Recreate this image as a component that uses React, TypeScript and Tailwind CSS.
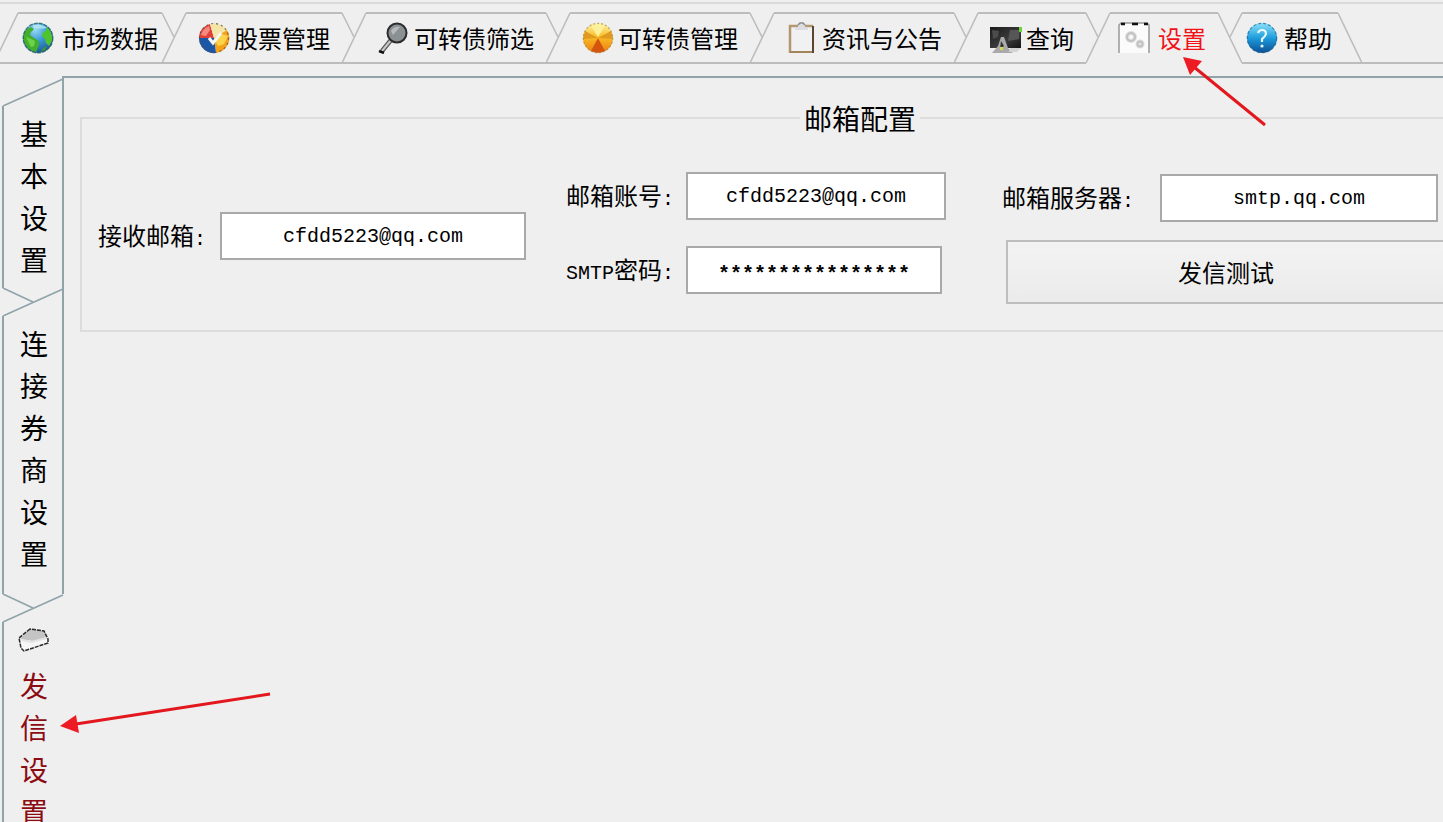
import type { ReactNode } from 'react';

const LINE = '#bcbcbc';
const SIDE = '#8fa3a9';

function GlobeIcon() {
  return (
    <svg className="h-8 w-8 shrink-0" viewBox="0 0 32 32" aria-hidden="true">
      <defs>
        <radialGradient id="sea" cx="0.4" cy="0.2" r="0.8">
          <stop offset="0" stopColor="#9fdcf5" />
          <stop offset="0.5" stopColor="#3d9bd6" />
          <stop offset="1" stopColor="#1c5b9c" />
        </radialGradient>
      </defs>
      <circle cx="16" cy="16" r="15" fill="url(#sea)" />
      <path d="M2 11 L5 7 L9 5 L12 7 L9 10 L8 13 L12 16 L17 19 L17 23 L14 30 L10 29 L6 26 L3 22 L1 17 Z" fill="#43b02c" />
      <path d="M4 15 L9 17 L13 19 L12 24 L9 25 L7 21 Z" fill="#6fd04a" />
      <path d="M24 5 L28 8 L30 14 L30 19 L27 24 L24 21 L23 17 L20 14 L21 10 L24 9 Z" fill="#4fc42f" />
      <path d="M21 26 L25 24 L23 28 L19 30 Z" fill="#389a32" />
      <path d="M11 3 Q19 1 25 6 Q18 7 12 6 Z" fill="#b9e8f2" opacity="0.8" />
      <circle cx="16" cy="16" r="14.8" fill="none" stroke="#245f5b" strokeWidth="1.4" strokeDasharray="4 1" opacity="0.75" />
    </svg>
  );
}

function PieIcon() {
  return (
    <svg className="h-8 w-8 shrink-0" viewBox="0 0 32 32" aria-hidden="true">
      <path d="M16 16 L1 16 A15 14 0 0 1 12 2 Z" fill="#e0403a" />
      <path d="M16 16 L12 2 A15 15 0 0 1 29 8 Z" fill="#f3e6a6" />
      <path d="M16 16 L29 8 A15 15 0 0 1 18 31 Z" fill="#f5a21b" />
      <path d="M16 16 L24 12 L30 14 L26 22 L20 24 Z" fill="#fcd34b" />
      <path d="M16 16 L18 31 A15 15 0 0 1 1 16 Z" fill="#1c57a6" />
      <path d="M3 13 A14 14 0 0 1 11 4 L12 8 L8 14 Z" fill="#f48b80" />
      <path d="M11 16 L15 21 L23 11" fill="none" stroke="#f4f6f8" strokeWidth="3" />
      <circle cx="16" cy="16" r="14.5" fill="none" stroke="#5c4a52" strokeWidth="1.2" strokeDasharray="2 3" opacity="0.8" />
    </svg>
  );
}

function MagnifierIcon() {
  return (
    <svg className="h-8 w-8 shrink-0" viewBox="0 0 32 32" aria-hidden="true">
      <path d="M13 18 L4 29" stroke="#555" strokeWidth="4.5" />
      <path d="M13 18 L4 29" stroke="#c9c9c9" strokeWidth="2" />
      <path d="M1 29 L6 31" stroke="#111" strokeWidth="2.5" />
      <circle cx="19" cy="11" r="9.5" fill="#8b9093" stroke="#2b2b2b" strokeWidth="2" />
      <path d="M13 9 Q16 4 22 5 L15 13 Z" fill="#b6babc" />
    </svg>
  );
}

function OrangeIcon() {
  return (
    <svg className="h-8 w-8 shrink-0" viewBox="0 0 32 32" aria-hidden="true">
      <defs>
        <linearGradient id="amber" x1="0" y1="0" x2="0" y2="1">
          <stop offset="0" stopColor="#fff3b0" />
          <stop offset="0.45" stopColor="#f9bf25" />
          <stop offset="1" stopColor="#ef7c10" />
        </linearGradient>
      </defs>
      <circle cx="16" cy="16" r="15" fill="url(#amber)" />
      <path d="M16 16 L1 17 L3 9 Z" fill="#e09a22" />
      <path d="M16 16 L31 17 L29 9 Z" fill="#e09a22" />
      <path d="M16 16 L9 29 Q16 32 23 29 Z" fill="#d4560e" />
      <path d="M16 15 L9 4 Q16 0 23 4 Z" fill="#fdf09a" />
      <circle cx="16" cy="16" r="14.7" fill="none" stroke="#9b8a59" strokeWidth="1.2" strokeDasharray="2 2" opacity="0.7" />
    </svg>
  );
}

function ClipboardIcon() {
  return (
    <svg className="h-8 w-8 shrink-0" viewBox="0 0 32 32" aria-hidden="true">
      <rect x="4" y="4" width="23" height="27" fill="#f1f1f3" />
      <path d="M27 4 H4 V31" fill="none" stroke="#b3986f" strokeWidth="2.5" />
      <path d="M4 30 H27" stroke="#a3835a" strokeWidth="2" />
      <path d="M27 4 V31" stroke="#5c452f" strokeWidth="2" />
      <path d="M9 8 V5 H12 V2 H19 V5 H22 V8 Z" fill="#dcdde0" />
      <path d="M12 3 L14 1 H17 L19 3" fill="none" stroke="#888" strokeWidth="1.5" />
    </svg>
  );
}

function ScreenIcon() {
  return (
    <svg className="h-8 w-8 shrink-0" viewBox="0 0 32 32" aria-hidden="true">
      <defs>
        <linearGradient id="shade" x1="0" y1="0" x2="1" y2="1">
          <stop offset="0" stopColor="#1b1b1b" />
          <stop offset="0.6" stopColor="#3c3c3c" />
          <stop offset="1" stopColor="#151515" />
        </linearGradient>
      </defs>
      <path d="M0 5 H31 V26 H0 Z" fill="url(#shade)" />
      <path d="M2 8 L9 9 L8 15 L3 17 Z" fill="#4c4c4c" />
      <path d="M20 8 H29 V17 L18 19 Z" fill="#565656" />
      <path d="M11 15 L14 15 L18 26 L23 31 H2 L8 24 Z" fill="#aaa" />
      <path d="M11 19 L14 24 L10 27 Z" fill="#333" />
      <path d="M20 26 H31 L27 30 H19 Z" fill="#d4d4d4" />
      <rect x="29" y="5" width="3" height="5" fill="#69d43a" />
      <rect x="10" y="25" width="3" height="3" fill="#d8d94a" />
    </svg>
  );
}

function GearSheetIcon() {
  return (
    <svg className="h-8 w-8 shrink-0" viewBox="0 0 32 32" aria-hidden="true">
      <rect x="1" y="1" width="30" height="30" fill="#fbfbfb" />
      <path d="M1 31 V3 L3 1 H29 L31 3 V31" fill="none" stroke="#999" strokeWidth="1.5" />
      <path d="M3 2 H7 M14 2 H20 M26 2 H30" stroke="#111" strokeWidth="2.5" />
      <circle cx="13" cy="15" r="4" fill="none" stroke="#dedede" strokeWidth="4" />
      <circle cx="13" cy="15" r="4" fill="none" stroke="#c2c2c2" strokeWidth="2" />
      <circle cx="22" cy="22" r="2.5" fill="none" stroke="#dedede" strokeWidth="4" />
      <circle cx="22" cy="22" r="2.5" fill="none" stroke="#c2c2c2" strokeWidth="2" />
    </svg>
  );
}

function HelpIcon() {
  return (
    <svg className="h-8 w-8 shrink-0" viewBox="0 0 32 32" aria-hidden="true">
      <defs>
        <linearGradient id="azure" x1="0" y1="0" x2="0" y2="1">
          <stop offset="0" stopColor="#8ce2fa" />
          <stop offset="0.5" stopColor="#1c9cdc" />
          <stop offset="1" stopColor="#0e4f94" />
        </linearGradient>
      </defs>
      <circle cx="16" cy="16" r="15" fill="url(#azure)" />
      <circle cx="16" cy="16" r="14.7" fill="none" stroke="#1b5f92" strokeWidth="1.2" strokeDasharray="3 2" opacity="0.7" />
      <path d="M12 11 Q13 8 16 8 Q20 8 20 12 Q19 15 16 17 V20" fill="none" stroke="#e9f8ff" strokeWidth="2.2" />
      <circle cx="16" cy="24" r="1.6" fill="#e9f8ff" />
    </svg>
  );
}

function EnvelopeIcon() {
  return (
    <svg className="h-6 w-8 shrink-0" viewBox="0 2 32 24" aria-hidden="true">
      <path d="M1 12 L12 3 L26 5 L30 14 L30 17 L6 25 L3 22 Z" fill="#f6f6f6" />
      <path d="M2 13 L12 3 L26 5 L29 11 L15 15 Z" fill="#c4c4c4" />
      <path d="M4 14 L13 16 L29 12" fill="none" stroke="#e2e2e2" strokeWidth="2" />
      <path
        d="M12 3 L1 12 L3 22 L6 25 L30 17 L30 13 L26 5 Z"
        fill="none"
        stroke="#2a2a2a"
        strokeWidth="1.5"
        strokeDasharray="4 1"
      />
    </svg>
  );
}

type TopTab = { label: string; icon: ReactNode; box: string; active?: boolean; last?: boolean };

const topTabs: TopTab[] = [
  { label: '市场数据', icon: <GlobeIcon />, box: 'pl-7 pr-1 gap-2' },
  { label: '股票管理', icon: <PieIcon />, box: 'pl-9 pr-3 gap-1' },
  { label: '可转债筛选', icon: <MagnifierIcon />, box: 'pl-9 pr-3 gap-1' },
  { label: '可转债管理', icon: <OrangeIcon />, box: 'pl-9 pr-3 gap-1' },
  { label: '资讯与公告', icon: <ClipboardIcon />, box: 'pl-9 pr-3 gap-1' },
  { label: '查询', icon: <ScreenIcon />, box: 'pl-9 pr-3 gap-1' },
  { label: '设置', icon: <GearSheetIcon />, box: 'pl-8 pr-3 gap-2', active: true },
  { label: '帮助', icon: <HelpIcon />, box: 'pl-7 pr-1.5 gap-1.5', last: true },
];

function TopTabButton({ tab }: { tab: TopTab }) {
  const fullRight = tab.active || tab.last;
  return (
    <button
      type="button"
      role="tab"
      aria-selected={!!tab.active}
      className={`relative flex h-[52px] shrink-0 items-center whitespace-nowrap text-2xl ${tab.box} ${
        tab.active ? 'text-[#f01418]' : 'text-black'
      }`}
    >
      <span className="absolute top-0 right-0 left-6 h-0.5 bg-[#bcbcbc]" />
      {!tab.active && (
        <span className={`absolute right-0 bottom-0 h-0.5 bg-[#bcbcbc] ${tab.last ? 'left-6' : 'left-0'}`} />
      )}
      <svg className="absolute top-0 left-0 h-[52px] w-6" viewBox="0 0 24 52" aria-hidden="true">
        <path d={tab.last ? 'M24 1 L12 25' : 'M24 1 L0 51'} stroke={LINE} strokeWidth="1.6" />
      </svg>
      <svg className="absolute top-0 left-full h-[52px] w-6" viewBox="0 0 24 52" aria-hidden="true">
        <path d={fullRight ? 'M0 1 L24 51' : 'M0 1 L12 25'} stroke={LINE} strokeWidth="1.6" />
      </svg>
      {tab.icon}
      <span>{tab.label}</span>
    </button>
  );
}

type SideTab = { label: string; box: string; icon?: ReactNode; active?: boolean };

const sideTabs: SideTab[] = [
  { label: '基本设置', box: 'pb-2' },
  { label: '连接券商设置', box: 'pb-5' },
  { label: '发信设置', box: 'pb-5', icon: <EnvelopeIcon />, active: true },
];

function SideTabButton({ tab }: { tab: SideTab }) {
  return (
    <button
      type="button"
      role="tab"
      aria-selected={!!tab.active}
      aria-label={tab.label}
      className={`relative flex w-full shrink-0 flex-col items-center pt-[34px] pl-0.5 text-[28px] leading-[42px] ${tab.box} ${
        tab.active ? 'text-[#8b0c12]' : 'text-black'
      }`}
    >
      <span className="absolute top-7 bottom-0 left-0 w-0.5 bg-[#8fa3a9]" />
      {!tab.active && <span className="absolute top-0 right-0 bottom-0 w-0.5 bg-[#8fa3a9]" />}
      <svg className="absolute top-0 left-0 h-7 w-full" viewBox="0 0 62 28" aria-hidden="true">
        <path d="M1 28 L61 1" stroke={SIDE} strokeWidth="1.6" />
      </svg>
      {!tab.active && (
        <svg className="absolute top-full left-0 h-7 w-full" viewBox="0 0 62 28" aria-hidden="true">
          <path d="M1 0 L31 14" stroke={SIDE} strokeWidth="1.6" />
        </svg>
      )}
      {tab.icon && <span className="flex h-9 items-start">{tab.icon}</span>}
      {tab.label.split('').map((char, i) => (
        <span key={i}>{char}</span>
      ))}
    </button>
  );
}

const field =
  'h-12 border-2 border-[#a9a9a9] bg-white text-center font-["Liberation_Mono","Noto_Sans_CJK_SC",monospace] text-xl text-black outline-none';

function Label({ id, prefix, text, width }: { id: string; prefix?: string; text: string; width: string }) {
  return (
    <label htmlFor={id} className={`flex shrink-0 items-baseline whitespace-nowrap text-2xl ${width}`}>
      {prefix && <span className="font-['Liberation_Mono',monospace] text-xl">{prefix}</span>}
      <span>{text}</span>
      <span className="font-['Liberation_Mono',monospace] text-xl">:</span>
    </label>
  );
}

export default function App() {
  return (
    <div className='relative flex h-screen flex-col overflow-hidden bg-[#efefef] font-["Noto_Sans_CJK_SC",sans-serif] text-black'>
      <header className="pt-0.5">
        <div className="h-0.5 bg-[#dadada]" />
        <div role="tablist" className="-ml-1.5 flex pt-2">
          {topTabs.map((tab) => (
            <TopTabButton key={tab.label} tab={tab} />
          ))}
          <div className="h-[52px] flex-1 border-b-2 border-[#bcbcbc]" />
        </div>
      </header>

      <div className="mt-3 flex min-h-0 flex-1">
        <div role="tablist" aria-orientation="vertical" className="ml-0.5 flex w-[62px] shrink-0 flex-col pt-0.5">
          {sideTabs.map((tab) => (
            <SideTabButton key={tab.label} tab={tab} />
          ))}
        </div>

        <main className="-ml-0.5 min-w-0 flex-1 overflow-hidden border-t-2 border-[#8fa3a9] pt-5 pl-[18px]">
          <fieldset className="min-w-[1560px] border-2 border-[#dcdcdc] pb-[26px]">
            <legend className="mx-auto px-1 text-[28px] leading-10">邮箱配置</legend>
            <form className="flex items-center pt-6 pl-4" onSubmit={(e) => e.preventDefault()}>
              <div className="flex items-center pt-1.5">
                <Label id="receiver" text="接收邮箱" width="w-[122px]" />
                <input id="receiver" className={`${field} w-[306px]`} defaultValue="cfdd5223@qq.com" />
              </div>
              <div className="ml-10 flex flex-col gap-[26px]">
                <div className="flex items-center">
                  <Label id="account" text="邮箱账号" width="w-[120px]" />
                  <input id="account" className={`${field} w-[260px]`} defaultValue="cfdd5223@qq.com" />
                </div>
                <div className="flex items-center">
                  <Label id="secret" prefix="SMTP" text="密码" width="w-[120px]" />
                  <input id="secret" className={`${field} w-64 pt-2 font-bold`} defaultValue="****************" />
                </div>
              </div>
              <div className="ml-14 flex flex-col gap-[18px] pt-3">
                <div className="flex items-center">
                  <Label id="server" text="邮箱服务器" width="w-[158px]" />
                  <input id="server" className={`${field} w-[278px]`} defaultValue="smtp.qq.com" />
                </div>
                <button
                  type="button"
                  className="ml-1 h-16 w-[440px] border-2 border-[#bebebe] bg-linear-to-b from-[#f3f3f3] to-[#ebebeb] text-2xl"
                >
                  发信测试
                </button>
              </div>
            </form>
          </fieldset>
        </main>
      </div>

      <svg className="pointer-events-none absolute top-14 left-[1180px] h-[72px] w-[88px]" viewBox="0 0 88 72" aria-hidden="true">
        <path d="M14 11 L85 69" stroke="#e3181f" strokeWidth="3" />
        <path d="M3 1 L22 5 L10 19 Z" fill="#ed1c24" />
      </svg>
      <svg className="pointer-events-none absolute top-[690px] left-[58px] h-12 w-[216px]" viewBox="0 0 216 48" aria-hidden="true">
        <path d="M18 34 L212 4" stroke="#e3181f" strokeWidth="3" />
        <path d="M2 36 L18 25 L21 43 Z" fill="#ed1c24" />
      </svg>
    </div>
  );
}
